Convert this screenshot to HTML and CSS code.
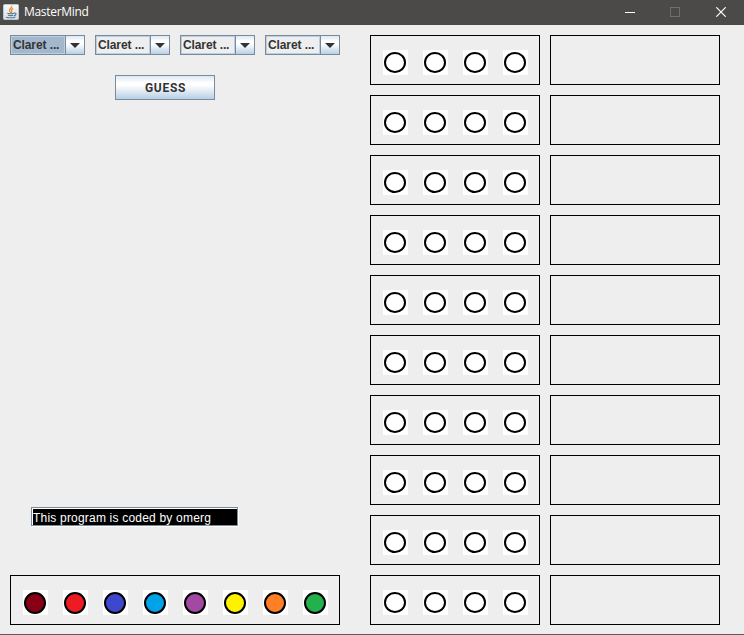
FILE: index.html
```
<!DOCTYPE html>
<html lang="en">
<head>
<meta charset="utf-8">
<title>MasterMind</title>
<link rel="stylesheet" href="styles.css">
</head>
<body>
<header class="titlebar">
  <svg class="logo" width="16" height="16" viewBox="0 0 16 16">
    <defs><linearGradient id="tile" x2="0" y2="1"><stop stop-color="#fafafa"/><stop offset="1" stop-color="#d5dde3"/></linearGradient></defs>
    <rect x=".5" y=".5" width="15" height="15" rx="1" fill="url(#tile)" stroke="#b9c7d2"/>
    <path d="M8.8 1.8C9.5 4 5.4 4.6 6.6 7L8 9M10.2 4.4C7.8 5.6 8 6.3 8.9 7.4L8.3 8.8" fill="none" stroke="#ee8b2d" stroke-width="1.2"/>
    <path d="M4.3 9.3q3.5 1 6.6 0M5 11.2q3 .9 5.2 0M3 13.2q5 1.3 9.5-.3M11 9.2c3-.6 2.4 2-.2 2.6" fill="none" stroke="#54799a" stroke-width="1.1"/>
  </svg>
  <h1 class="title">MasterMind</h1>
  <div class="controls">
    <svg width="10" height="10" viewBox="0 0 10 10"><path d="M0 5.5H10" stroke="#fff"/></svg>
    <svg width="10" height="10" viewBox="0 0 10 10"><rect x=".5" y=".5" width="9" height="9" fill="none" stroke="#6f6e6b"/></svg>
    <svg width="10" height="10" viewBox="0 0 10 10"><path d="M.3.3L9.7 9.7M9.7.3L.3 9.7" stroke="#fff" stroke-width="1.2"/></svg>
  </div>
</header>
<main class="game">
  <section class="side">
    <div class="combos" id="combos"></div>
    <button class="guess">GUESS</button>
    <div class="credit">This program is coded by omerg</div>
    <div class="box palette" id="palette"></div>
  </section>
  <section class="board" id="board"></section>
</main>
<script src="script.js"></script>
</body>
</html>
```
FILE: styles.css
```
*, ::before { box-sizing: border-box; }
body {
  margin: 0;
  height: 635px;
  display: flex;
  flex-direction: column;
  overflow: hidden;
  background: #eee;
  border-bottom: 1px solid #5b5a58;
  font-family: "Liberation Sans", Arial, sans-serif;
  font-size: 12px;
  color: #333;
}
.titlebar {
  height: 25px;
  flex: none;
  display: flex;
  align-items: flex-start;
  padding: 4px 18px 0 3px;
  background: #4c4a48;
}
.title {
  margin: 0 0 0 5px;
  font: 12px/16px "Open Sans", sans-serif;
  letter-spacing: -0.3px;
  color: #fff;
}
.controls {
  display: flex;
  gap: 35px;
  margin: 3px 0 0 auto;
}
.controls svg, .logo { display: block; }
.controls svg:last-child { margin-left: 1px; }
.game {
  display: flex;
  gap: 30px;
  padding: 10px;
}
.side {
  width: 330px;
  height: 590px;
  display: flex;
  flex-direction: column;
}
.combos { display: flex; gap: 10px; }
.combo {
  width: 75px;
  height: 20px;
  display: flex;
  border: 1px solid #7a8a99;
}
.combo-text {
  width: 54px;
  padding-left: 1px;
  border: 1px solid #b8cfe5;
  font-weight: bold;
  line-height: 17px;
  letter-spacing: -0.1px;
  white-space: nowrap;
}
.combo:first-child .combo-text { background: #a3b8cc; }
.combo-arrow {
  width: 19px;
  display: grid;
  place-items: center;
  border-left: 1px solid #7a8a99;
  background: linear-gradient(#dde8f3, #fff 30%, #fff 45%, #b8cfe5);
}
.combo-arrow svg { display: block; margin-top: 1px; }
.guess {
  width: 100px;
  height: 25px;
  margin: 20px 0 0 105px;
  padding: 1px 0 0 1px;
  border: 1px solid #7a8a99;
  background: linear-gradient(#dde8f3, #fff 30%, #fff 40%, #b8cfe5);
  font: bold 12px/22px Roboto, "Liberation Sans", sans-serif;
  letter-spacing: 0.7px;
  color: #333;
}
.credit {
  width: 207px;
  height: 19px;
  margin: auto 0 49px 21px;
  border: 1px solid #7a8a99;
  box-shadow: inset 1px 1px #fff, 1px 1px #fff;
  padding-left: 1px;
  background: #000;
  line-height: 20px;
  letter-spacing: 0.2px;
  color: #fff;
}
.box {
  height: 50px;
  border: 1px solid #000;
}
.palette, .guess-row {
  display: flex;
  gap: 15px;
  padding: 14px 0 0 12px;
}
.board {
  display: grid;
  grid-template-columns: 170px 170px;
  gap: 10px;
}
.peg {
  width: 25px;
  height: 25px;
  padding: 2px 0 0 1px;
  background: #fff;
}
.peg::before {
  content: "";
  display: block;
  width: 22px;
  height: 21px;
  border: 2px solid #000;
  border-radius: 50%;
  background: var(--color, #fff);
}
.palette .peg::before { height: 22px; }
```
FILE: script.js
```
const colors = ["#880015", "#ed1c24", "#3f48cc", "#00a2e8", "#a349a4", "#fff200", "#ff7f27", "#22b14c"];

document.getElementById("combos").innerHTML = `
  <div class="combo">
    <span class="combo-text">Claret ...</span>
    <span class="combo-arrow"><svg width="10" height="5" viewBox="0 0 10 5"><path d="M0 0H10L5 5Z" fill="#333"/></svg></span>
  </div>`.repeat(4);

document.getElementById("palette").innerHTML =
  colors.map(c => `<span class="peg" style="--color:${c}"></span>`).join("");

document.getElementById("board").innerHTML =
  (`<div class="box guess-row">${'<span class="peg"></span>'.repeat(4)}</div><div class="box"></div>`).repeat(10);
```
